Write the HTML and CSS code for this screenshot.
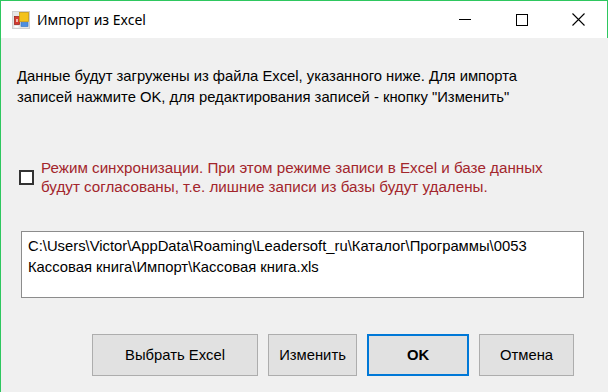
FILE: index.html
```html
<!DOCTYPE html>
<html lang="ru">
<head>
<meta charset="utf-8">
<title>Импорт из Excel</title>
<link rel="stylesheet" href="styles.css">
</head>
<body>
<div class="window">
  <div class="titlebar">
    <svg class="app-icon" width="18" height="18" viewBox="0 0 18 18">
      <rect x="0.5" y="0.5" width="17" height="17" fill="#e6e6e6" stroke="#cfcfcf"/>
      <rect x="2.5" y="5.5" width="5" height="8" fill="#d43a2f" stroke="#9c2a22" stroke-width="0.8"/>
      <rect x="4" y="8" width="2" height="3" fill="#f2b8b0"/>
      <rect x="7.5" y="1.5" width="9" height="9" fill="#f3c21b" stroke="#c79a10" stroke-width="0.8"/>
      <rect x="9" y="11.5" width="7" height="4" fill="#4f8fe0" stroke="#2f6fc0" stroke-width="0.6"/>
      <rect x="2.5" y="15" width="4" height="1.5" fill="#ffffff"/>
    </svg>
    <span class="title">Импорт из Excel</span>
    <div class="caption-buttons">
      <div class="cap-btn"><span class="min-glyph"></span></div>
      <div class="cap-btn"><span class="max-glyph"></span></div>
      <div class="cap-btn">
        <svg width="13" height="13" viewBox="0 0 13 13"><path d="M0.5 0.5 L12.5 12.5 M12.5 0.5 L0.5 12.5" stroke="#000" stroke-width="1.1" fill="none"/></svg>
      </div>
    </div>
  </div>
  <div class="content">
    <p class="info">Данные будут загружены из файла Excel, указанного ниже. Для импорта<br>записей нажмите OK, для редактирования записей - кнопку "Изменить"</p>
    <label class="sync">
      <span class="check"></span>
      <span class="sync-text">Режим синхронизации. При этом режиме записи в Excel и базе данных<br>будут согласованы, т.е. лишние записи из базы будут удалены.</span>
    </label>
    <div class="path-box">C:\Users\Victor\AppData\Roaming\Leadersoft_ru\Каталог\Программы\0053<br>Кассовая книга\Импорт\Кассовая книга.xls</div>
    <div class="buttons">
      <button class="btn btn-pick">Выбрать Excel</button>
      <button class="btn btn-edit">Изменить</button>
      <button class="btn btn-ok">OK</button>
      <button class="btn btn-cancel">Отмена</button>
    </div>
  </div>
</div>
</body>
</html>
```
FILE: styles.css
```css
html, body {
  margin: 0;
  padding: 0;
}
body {
  width: 608px;
  height: 392px;
  background: #f0f0f0;
  overflow: hidden;
  font-family: "Liberation Sans", Arial, sans-serif;
}
.window {
  box-sizing: border-box;
  width: 608px;
  height: 392px;
  border-left: 1px solid #2ec75f;
  border-top: 1px solid #2ec75f;
  display: flex;
  flex-direction: column;
}
.titlebar {
  box-sizing: border-box;
  height: 37px;
  background: #ffffff;
  border-right: 1px solid #2ec75f;
  display: flex;
  align-items: center;
}
.app-icon {
  margin-left: 11px;
  margin-top: 1px;
  flex: none;
}
.title {
  margin-left: 7px;
  font-family: "Noto Sans", "Open Sans", sans-serif;
  font-size: 14px;
  color: #000;
}
.caption-buttons {
  margin-left: auto;
  display: flex;
  height: 100%;
}
.cap-btn {
  width: 57px;
  height: 100%;
  display: flex;
  align-items: center;
  justify-content: center;
}
.min-glyph {
  display: block;
  width: 12px;
  height: 1px;
  background: #000;
}
.max-glyph {
  display: block;
  box-sizing: border-box;
  width: 12px;
  height: 12px;
  border: 1px solid #000;
}
.content {
  padding: 0 0 0 16px;
  font-size: 14.8px;
  color: #000;
}
.info {
  margin: 28px 0 0 0;
  line-height: 21px;
}
.sync {
  margin-top: 50px;
  display: flex;
  align-items: center;
}
.check {
  box-sizing: border-box;
  width: 15px;
  height: 15px;
  border: 2px solid #333;
  background: #fff;
  flex: none;
  margin-left: 2px;
}
.sync-text {
  margin-left: 7px;
  color: #a3262c;
  font-size: 15.2px;
  line-height: 19px;
}
.path-box {
  box-sizing: border-box;
  margin: 35px 0 0 4px;
  width: 563px;
  height: 67px;
  background: #fff;
  border: 1px solid #8c8c8c;
  padding: 4px 0 0 6px;
  line-height: 21px;
}
.buttons {
  margin-top: 36px;
  margin-left: 75px;
  display: flex;
  gap: 10px;
}
.btn {
  box-sizing: border-box;
  height: 42px;
  background: #e1e1e1;
  border: 1px solid #adadad;
  font-family: "Liberation Sans", Arial, sans-serif;
  font-size: 14.8px;
  color: #000;
  padding: 0;
}
.btn-pick { width: 166px; }
.btn-edit { width: 89px; }
.btn-ok {
  width: 102px;
  border: 2px solid #0078d7;
  font-weight: bold;
}
.btn-cancel { width: 95px; }
```
